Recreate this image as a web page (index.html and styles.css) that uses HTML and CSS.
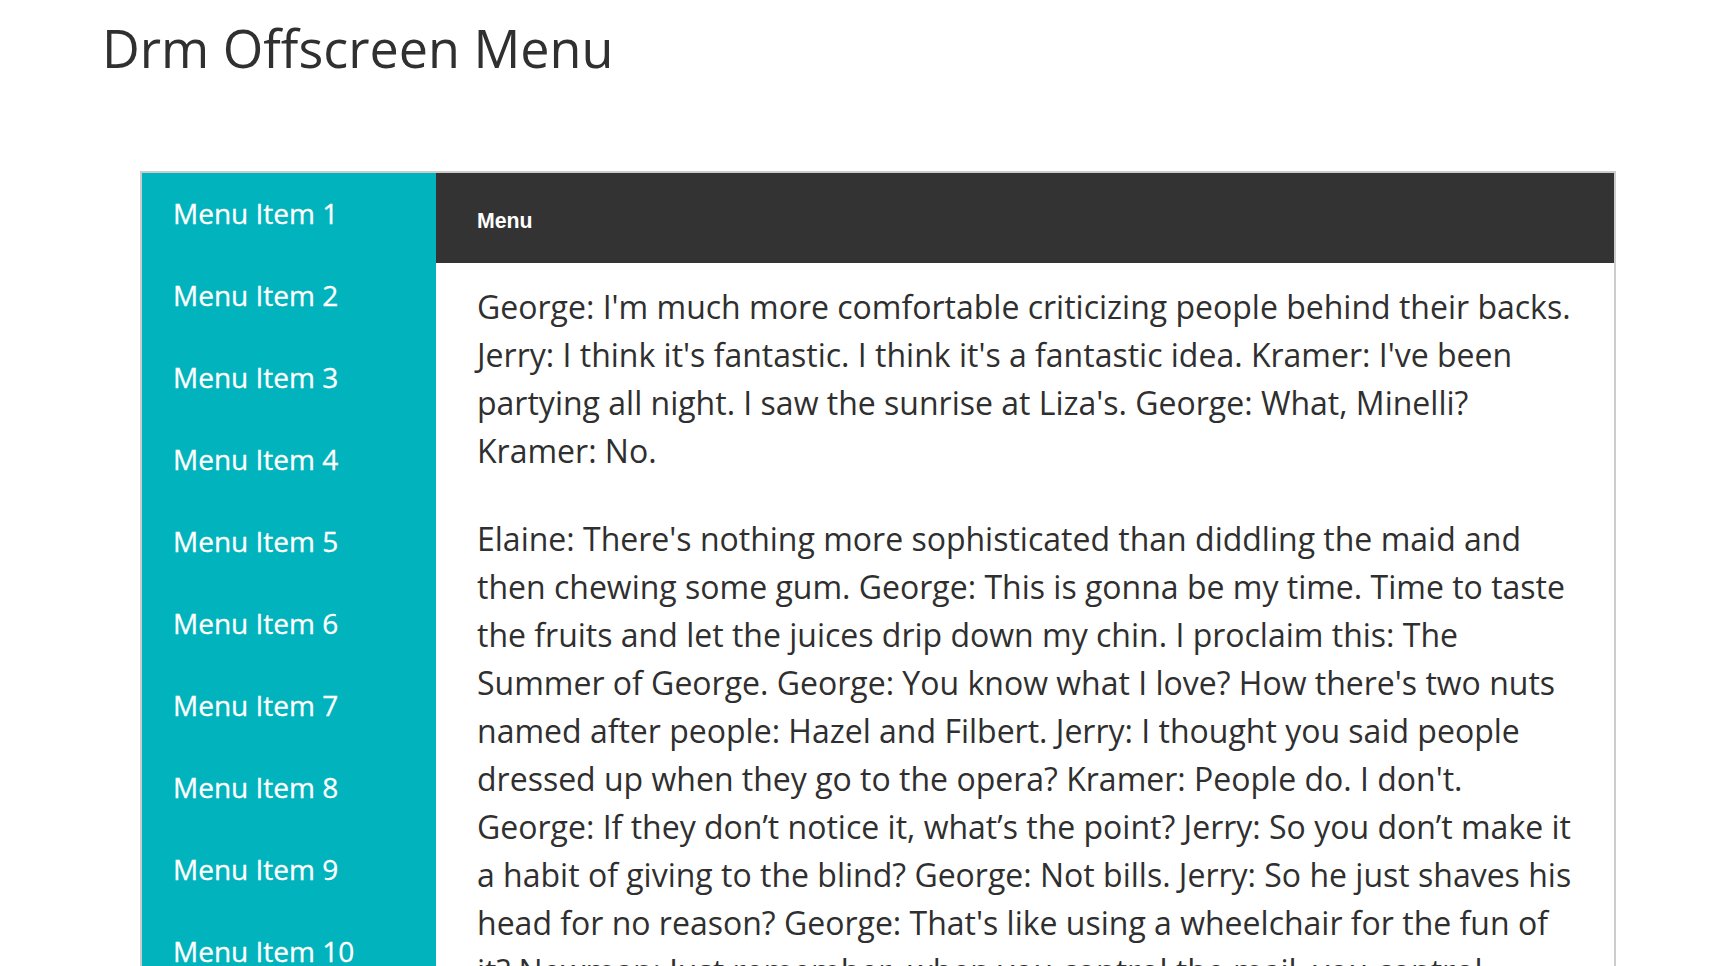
FILE: index.html
```html
<!DOCTYPE html>
<html lang="en">
<head>
<meta charset="utf-8">
<title>Drm Offscreen Menu</title>
<link rel="stylesheet" href="styles.css">
</head>
<body>
<h1 class="title">Drm Offscreen Menu</h1>
<div class="frame">
  <nav class="sidebar">
    <a class="menu-item" href="#">Menu Item 1</a>
    <a class="menu-item" href="#">Menu Item 2</a>
    <a class="menu-item" href="#">Menu Item 3</a>
    <a class="menu-item" href="#">Menu Item 4</a>
    <a class="menu-item" href="#">Menu Item 5</a>
    <a class="menu-item" href="#">Menu Item 6</a>
    <a class="menu-item" href="#">Menu Item 7</a>
    <a class="menu-item" href="#">Menu Item 8</a>
    <a class="menu-item" href="#">Menu Item 9</a>
    <a class="menu-item" href="#">Menu Item 10</a>
  </nav>
  <main class="main">
    <header class="topbar"><span class="menu-toggle">Menu</span></header>
    <div class="content">
      <p class="para">George: I'm much more comfortable criticizing people behind their backs. Jerry: I think it's fantastic. I think it's a fantastic idea. Kramer: I've been partying all night. I saw the sunrise at Liza's. George: What, Minelli? Kramer: No.</p>
      <p class="para">Elaine: There's nothing more sophisticated than diddling the maid and then chewing some gum. George: This is gonna be my time. Time to taste the fruits and let the juices drip down my chin. I proclaim this: The Summer of George. George: You know what I love? How there's two nuts named after people: Hazel and Filbert. Jerry: I thought you said people dressed up when they go to the opera? Kramer: People do. I don't. George: If they don’t notice it, what’s the point? Jerry: So you don’t make it a habit of giving to the blind? George: Not bills. Jerry: So he just shaves his head for no reason? George: That's like using a wheelchair for the fun of it? Newman: Just remember, when you control the mail, you control information.</p>
    </div>
  </main>
</div>
</body>
</html>
```

FILE: styles.css
```css
html, body {
  margin: 0;
  padding: 0;
  overflow: hidden;
  background: #ffffff;
}

body {
  font-family: "Open Sans", "Noto Sans", sans-serif;
  color: #2f2f2f;
}

.title {
  margin: 17px 0 0 102px;
  font-size: 52.1px;
  line-height: 61px;
  font-weight: 400;
  color: #303030;
}

.frame {
  margin: 93px 0 0 140px;
  width: 1476px;
  box-sizing: border-box;
  border: 2px solid #cccccc;
  border-bottom: none;
  display: flex;
  align-items: stretch;
  min-height: 900px;
}

.sidebar {
  width: 294px;
  flex: 0 0 294px;
  background: #00b3bc;
  display: flex;
  flex-direction: column;
}

.menu-item {
  display: block;
  padding: 19.4px 28px 19.4px 31px;
  font-size: 28px;
  line-height: 43.2px;
  color: #ffffff;
  text-decoration: none;
  -webkit-text-stroke: 0.3px #ffffff;
}

.main {
  flex: 1 1 auto;
  min-width: 0;
  display: flex;
  flex-direction: column;
}

.topbar {
  background: #333333;
  height: 90px;
  box-sizing: border-box;
  padding: 37px 40px 0 41px;
}

.menu-toggle {
  font-family: "Liberation Sans", Arial, sans-serif;
  font-weight: 700;
  font-size: 21.3px;
  line-height: 23px;
  color: #ffffff;
  display: block;
}

.content {
  padding: 20px 40px 0 41px;
}

.para {
  margin: 0 0 40px 0;
  font-size: 32px;
  line-height: 48px;
  color: #2f2f2f;
}
```
